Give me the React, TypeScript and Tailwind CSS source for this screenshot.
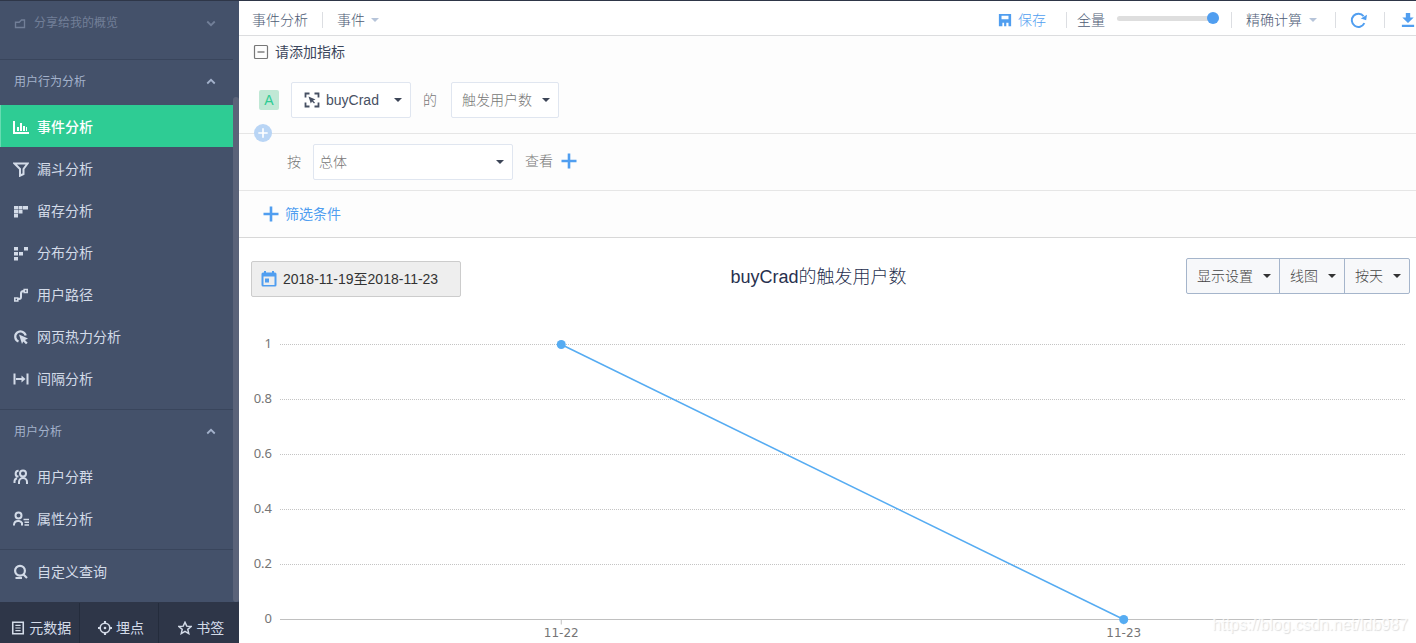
import type { ReactNode } from "react";
import clsx from "clsx";

type IconProps = { children: ReactNode; className?: string };

function Icon({ children, className }: IconProps) {
  return (
    <svg
      viewBox="0 0 16 16"
      fill="none"
      stroke="currentColor"
      strokeWidth="2"
      aria-hidden="true"
      className={clsx("shrink-0", className ?? "size-4")}
    >
      {children}
    </svg>
  );
}

const icons = {
  chart: (
    <Icon>
      <path d="M1 2v12h15" />
      <path d="M5 8v4M8 4v8M11 7v5" />
      <path d="M13.5 8v4" strokeWidth="1" />
    </Icon>
  ),
  funnel: (
    <Icon>
      <path d="M1.5 2.5h13L10.500 8v5L7 14.700V8L1.500 2.500z" strokeWidth="2" />
    </Icon>
  ),
  retention: (
    <Icon>
      <path
        d="M1 3h4v3.500H1zM5.500 3h4v3.500h-4zM10 3h5v3.500h-5zM1 7h4v3.500H1zM5.500 7h4v3.500h-4zM1 11h4v3.500H1z"
        fill="currentColor"
        stroke="none"
      />
    </Icon>
  ),
  distribution: (
    <Icon>
      <path
        d="M1 2h4v3.500H1zM11 2h4v3.500h-4zM1 7h4v3.500H1zM6 7h4v3.500H6zM1 12h4v3.500H1z"
        fill="currentColor"
        stroke="none"
      />
    </Icon>
  ),
  path: (
    <Icon>
      <path d="M4 12h2c1.500 0 2-.8 2-2V6.500C8 5 8.800 4 10.500 4H12" />
      <path d="M1.800 11h3v3h-3zM11.200 2.500h3v3h-3z" strokeWidth="1.600" />
    </Icon>
  ),
  heat: (
    <Icon>
      <path d="M5.500 12.600A5.300 5.300 0 1 1 12.700 6.500" strokeWidth="2.200" />
      <path d="M6 5.500l9 4-3 1.400 2.700 2.900-1.700 1.500-2.700-2.900L9 15z" fill="currentColor" stroke="none" />
    </Icon>
  ),
  interval: (
    <Icon>
      <path d="M1.500 2.500v11M14.500 2.500v11M3 8h7" />
      <path d="M8.500 4.500L12.500 8l-4 3.500z" fill="currentColor" stroke="none" />
    </Icon>
  ),
  users: (
    <Icon>
      <circle cx="10" cy="4.500" r="3" strokeWidth="2" />
      <path d="M6 15v-2a4 4 0 0 1 8 0v2M5.500 7.600A2.800 2.800 0 0 1 5.600 1.800M1.500 14v-1.500c0-1.600.8-2.700 2.500-3.200" strokeWidth="2" />
    </Icon>
  ),
  attributes: (
    <Icon>
      <circle cx="5.500" cy="4.500" r="3" strokeWidth="2" />
      <path d="M1 14.500v-1a4 4 0 0 1 4-3.500h1a4 4 0 0 1 3 2v2.500" strokeWidth="2" />
      <path d="M10.500 8.500H16M11.500 11.200H16M11.500 14H16" strokeWidth="1.500" />
    </Icon>
  ),
  query: (
    <Icon>
      <circle cx="7" cy="6.800" r="4.900" strokeWidth="2.200" />
      <path d="M10 10l4 4M2.500 14h6.500" strokeWidth="2.200" />
    </Icon>
  ),
};

const behaviorItems = [
  { label: "事件分析", icon: icons.chart, active: true },
  { label: "漏斗分析", icon: icons.funnel },
  { label: "留存分析", icon: icons.retention },
  { label: "分布分析", icon: icons.distribution },
  { label: "用户路径", icon: icons.path },
  { label: "网页热力分析", icon: icons.heat },
  { label: "间隔分析", icon: icons.interval },
];

const userItems = [
  { label: "用户分群", icon: icons.users },
  { label: "属性分析", icon: icons.attributes },
];

function Chevron({ up }: { up?: boolean }) {
  return (
    <Icon className="size-3">
      <path d={up ? "M3 10l5-5 5 5" : "M3 6l5 5 5-5"} strokeWidth="2.400" />
    </Icon>
  );
}

type NavItemProps = { label: string; icon: ReactNode; active?: boolean };

function NavItem({ label, icon, active }: NavItemProps) {
  return (
    <a
      href="#"
      className={clsx(
        "flex h-[42px] items-center gap-2 border-l pl-3 pt-0.5 text-sm",
        active
          ? "border-[#67dcb1] bg-[#2ecc94] font-medium text-white"
          : "border-transparent text-[#d3dbe8]"
      )}
    >
      {icon}
      {label}
    </a>
  );
}

function NavGroup({ title, items }: { title: string; items: NavItemProps[] }) {
  return (
    <div className="border-t border-[#39455c] pb-2.5">
      <button className="flex h-[45px] w-full items-center justify-between pb-0.5 pl-3.5 pr-4 text-xs text-[#a3b1cb]">
        {title}
        <Chevron up />
      </button>
      {items.map((item) => (
        <NavItem key={item.label} {...item} />
      ))}
    </div>
  );
}

function Sidebar() {
  return (
    <aside className="flex w-[239px] shrink-0 flex-col bg-[#44516a]">
      <div className="flex min-h-0 flex-1">
        <nav className="flex-1 overflow-hidden">
          <div className="pb-3.5">
            <button className="flex h-11 w-full items-center pl-3.5 pr-4 text-xs text-[#727f98]">
              <Icon className="size-3">
                <path d="M2 7h5l3-3h4v10H2z" strokeWidth="1.800" />
              </Icon>
              <span className="flex-1 pl-2 text-left">分享给我的概览</span>
              <Chevron />
            </button>
          </div>
          <NavGroup title="用户行为分析" items={behaviorItems} />
          <NavGroup title="用户分析" items={userItems} />
          <div className="border-t border-[#39455c]">
            <NavItem label="自定义查询" icon={icons.query} />
          </div>
        </nav>
        <div className="flex w-1.5 pt-24">
          <div className="flex-1 rounded-full bg-[#5b6379]" />
        </div>
      </div>
      <div className="grid h-[41px] shrink-0 grid-cols-3 divide-x divide-[#242c3c] bg-[#2e3648] pt-px text-sm text-[#d3dbe8]">
        <a href="#" className="flex items-center justify-center gap-1 pl-1 pt-2.5">
          <Icon className="size-3.5">
            <path d="M2 1.500h12v13H2z" strokeWidth="1.800" />
            <path d="M5 5h6M5 8h6M5 11h6" strokeWidth="1.400" />
          </Icon>
          元数据
        </a>
        <a href="#" className="flex items-center justify-center gap-1 pl-1 pt-2.5">
          <Icon className="size-3.5">
            <circle cx="8" cy="8" r="5.500" strokeWidth="1.800" />
            <circle cx="8" cy="8" r="1.500" fill="currentColor" stroke="none" />
            <path d="M8 0v3M8 13v3M0 8h3M13 8h3" strokeWidth="2.400" />
          </Icon>
          埋点
        </a>
        <a href="#" className="flex items-center justify-center gap-1 pl-1 pt-2.5">
          <Icon className="size-3.5">
            <path d="M8 1.500l2 4.400 4.900.4-3.700 3.200 1.100 4.900L8 11.900l-4.300 2.500 1.100-4.900-3.700-3.200 4.900-.4z" strokeWidth="1.700" />
          </Icon>
          书签
        </a>
      </div>
    </aside>
  );
}

type SelectProps = {
  label: string;
  value: string;
  className?: string;
  selectClass?: string;
  caretClass: string;
  icon?: ReactNode;
};

function Select({ label, value, className, selectClass, caretClass, icon }: SelectProps) {
  return (
    <div className={clsx("relative flex items-center", className)}>
      {icon}
      <select aria-label={label} className={clsx("h-full w-full appearance-none bg-transparent outline-none", selectClass)}>
        <option>{value}</option>
      </select>
      <svg viewBox="0 0 8 4" aria-hidden="true" className={clsx("pointer-events-none absolute h-1 w-2", caretClass)}>
        <path d="M0 0h8L4 4z" fill="currentColor" />
      </svg>
    </div>
  );
}

function Separator() {
  return <span className="h-4 w-px bg-[#dcdee2]" />;
}

function Plus({ className }: { className: string }) {
  return (
    <Icon className={className}>
      <path d="M8 0.500v15M0.500 8h15" strokeWidth="2.600" />
    </Icon>
  );
}

function TopBar() {
  return (
    <header className="flex h-[35px] items-center justify-between border-b border-[#dcdddf] pl-[13px] pt-1 text-sm font-light text-[#4d5b75]">
      <div className="flex items-center">
        <h1 className="pr-3.5">事件分析</h1>
        <Separator />
        <Select label="事件" value="事件" className="ml-3.5 w-[42px]" caretClass="right-0 text-[#b6c4d9]" />
      </div>
      <div className="flex items-center">
        <button className="flex items-center gap-1.5 pr-5 text-[#509ef0]">
          <Icon className="size-3.5">
            <path
              fillRule="evenodd"
              d="M1 1h14v14h-3v-4H9.500v4H1zM4 3v4h8V3zM5 11v4h2v-4z"
              fill="currentColor"
              stroke="none"
            />
          </Icon>
          保存
        </button>
        <Separator />
        <div className="flex items-center gap-3 pl-2.5 pr-3">
          <label htmlFor="sampling">全量</label>
          <input
            id="sampling"
            type="range"
            defaultValue={100}
            className="mb-1 h-[5px] w-[102px] appearance-none rounded-full bg-[#dedede] [&::-webkit-slider-thumb]:size-3 [&::-webkit-slider-thumb]:appearance-none [&::-webkit-slider-thumb]:rounded-full [&::-webkit-slider-thumb]:bg-[#509ef0]"
          />
        </div>
        <Separator />
        <Select
          label="计算方式"
          value="精确计算"
          className="ml-3.5 mr-[18px] w-[71px]"
          caretClass="right-0 text-[#b6c4d9]"
        />
        <Separator />
        <button aria-label="刷新" className="pl-3.5 pr-[17px] text-[#509ef0]">
          <Icon className="size-[17px]">
            <path d="M13.500 10.500A6.200 6.200 0 1 1 12.800 4" strokeWidth="1.900" />
            <path d="M16 2.500l-.8 5.200-5-1.700z" fill="currentColor" stroke="none" />
          </Icon>
        </button>
        <Separator />
        <button aria-label="下载" className="pl-4 pr-px text-[#509ef0]">
          <Icon className="size-3.5">
            <path d="M5.500 0h5v5h4L8 11.500 1.500 5h4zM1 13.500h14V16H1z" fill="currentColor" stroke="none" />
          </Icon>
        </button>
      </div>
    </header>
  );
}

function QueryBuilder() {
  return (
    <section className="border-b border-[#d8d8d8] bg-[#fdfdfd] text-sm font-light text-[#777]">
      <div className="flex h-8 items-center gap-1.5 pl-3.5 text-[#3b465c]">
        <button aria-label="收起" className="text-[#777]">
          <Icon className="size-4">
            <rect x="1.500" y="1.500" width="13" height="13" rx="1" strokeWidth="1.200" />
            <path d="M4.500 8h7" strokeWidth="1.400" />
          </Icon>
        </button>
        <h2 className="font-normal">请添加指标</h2>
      </div>
      <div className="flex h-[65px] items-center gap-3 pb-0.5 pl-5">
        <span className="flex size-5 items-center justify-center rounded-xs bg-[#c0e8d5] font-normal text-[#2ecc94]">A</span>
        <Select
          label="事件"
          value="buyCrad"
          className="h-9 w-[120px] rounded-xs border border-[#e0e6f0] bg-white text-[#475063]"
          selectClass="pl-[34px] font-normal"
          caretClass="right-2 text-[#3c4557]"
          icon={
            <Icon className="pointer-events-none absolute left-3 size-4">
              <path d="M1.500 5.500V1.500h4M10.500 1.500h4v4M14.500 10.500v4h-4M5.500 14.500h-4v-4" strokeWidth="1.800" />
              <path d="M4.500 4.500l7 3-2.500 1 2 2.200-1 .9-2-2.200-1.200 2z" fill="currentColor" stroke="none" />
            </Icon>
          }
        />
        <span>的</span>
        <Select
          label="指标"
          value="触发用户数"
          className="ml-0.5 h-9 w-[108px] rounded-xs border border-[#e0e6f0] bg-white"
          selectClass="pl-2.5"
          caretClass="right-2 text-[#3c4557]"
        />
      </div>
      <div className="relative flex h-[57px] items-center gap-3 border-t border-[#e6e6e6] pl-12">
        <button
          aria-label="添加指标"
          className="absolute -top-2.5 left-[15px] flex size-[18px] items-center justify-center rounded-full bg-[#b9d5f5] text-white"
        >
          <Plus className="size-2.5" />
        </button>
        <span>按</span>
        <Select
          label="维度"
          value="总体"
          className="h-9 w-[200px] rounded-xs border border-[#e0e6f0] bg-white"
          selectClass="pl-[5px]"
          caretClass="right-2 text-[#3c4557]"
        />
        <div className="flex items-center gap-2 pb-0.5">
          <span>查看</span>
          <button aria-label="添加维度" className="text-[#509ef0]">
            <Plus className="size-4" />
          </button>
        </div>
      </div>
      <div className="flex h-[47px] items-center border-t border-[#e6e6e6] pl-6">
        <button className="flex items-center gap-1.5 font-normal text-[#509ef0]">
          <Plus className="size-4" />
          筛选条件
        </button>
      </div>
    </section>
  );
}

const ticks = [1, 0.8, 0.6, 0.4, 0.2, 0];
const points = [
  { date: "11-22", value: 1, x: "25%" },
  { date: "11-23", value: 0, x: "75%" },
];

// 275px plot height, 8px headroom for the top marker
const toY = (value: number) => 8.5 + (1 - value) * 275;

function LineChart() {
  return (
    <svg role="img" aria-label="buyCrad的触发用户数" className="h-[307px] w-full overflow-visible">
      {ticks.map((tick) => (
        <g key={tick}>
          <line
            x1="0"
            x2="100%"
            y1={toY(tick)}
            y2={toY(tick)}
            stroke={tick === 0 ? "#c0c0c0" : "#c4c4c4"}
            strokeDasharray={tick === 0 ? undefined : "1 1"}
          />
          <text x="-8" y={toY(tick) + 3} textAnchor="end" className="fill-[#757575] font-['Noto_Sans'] text-[13px]">
            {tick}
          </text>
        </g>
      ))}
      <line x1={points[0].x} x2={points[1].x} y1={toY(1)} y2={toY(0)} stroke="#56acf2" strokeWidth="1.5" />
      {points.map((p) => (
        <g key={p.date}>
          <line x1={p.x} x2={p.x} y1={toY(0)} y2={toY(0) + 5} stroke="#c0c0c0" />
          <circle cx={p.x} cy={toY(p.value)} r="4.5" fill="#56acf2" />
          <text x={p.x} y={toY(0) + 17} textAnchor="middle" className="fill-[#757575] font-['DejaVu_Sans'] text-xs">
            {p.date}
          </text>
        </g>
      ))}
    </svg>
  );
}

function Report() {
  return (
    <section className="flex-1 bg-white pl-3 pr-1.5 pt-5">
      <div className="flex h-[39px] items-start">
        <button className="flex h-9 w-[210px] items-center gap-1.5 self-end rounded-xs border border-[#ccc] bg-[#eee] pl-[9px] text-sm text-[#333]">
          <Icon className="size-4">
            <path
              fillRule="evenodd"
              d="M3 0h2v1.500h6V0h2v1.500h1a1.500 1.500 0 0 1 1.500 1.500v11a1.500 1.500 0 0 1-1.500 1.500H2A1.500 1.500 0 0 1 .5 14V3A1.500 1.500 0 0 1 2 1.500h1zM2.500 5.500V14h11V5.500zM4 7.500h4v4H4z"
              fill="#509ef0"
              stroke="none"
            />
          </Icon>
          2018-11-19至2018-11-23
        </button>
        <h2 className="flex-1 self-center pb-0.5 pr-2.5 text-center text-lg font-light text-[#28304e]">buyCrad的触发用户数</h2>
        <div className="flex h-9 divide-x divide-[#a5b5cb] rounded-xs border border-[#a5b5cb] bg-[#f7f8fa] text-sm font-light text-[#444]">
          <Select label="显示设置" value="显示设置" className="w-[93px]" selectClass="pl-2.5" caretClass="right-2 text-[#333]" />
          <Select label="图表类型" value="线图" className="w-[65px]" selectClass="pl-2.5" caretClass="right-2 text-[#333]" />
          <Select label="时间粒度" value="按天" className="w-16" selectClass="pl-2.5" caretClass="right-2 text-[#333]" />
        </div>
      </div>
      <div className="ml-[29px] mr-[5px] mt-[39px]">
        <LineChart />
      </div>
    </section>
  );
}

export default function App() {
  return (
    <div className="relative flex h-screen overflow-hidden border-t border-[#2e3648] font-['Liberation_Sans','Noto_Sans_CJK_SC',sans-serif]">
      <Sidebar />
      <main className="flex min-w-0 flex-1 flex-col bg-white">
        <TopBar />
        <QueryBuilder />
        <Report />
      </main>
      <span className="pointer-events-none absolute bottom-1.5 right-2 text-base text-white/80 [text-shadow:1px_1px_1px_#ddd]">
        https://blog.csdn.net/ldb987
      </span>
    </div>
  );
}
